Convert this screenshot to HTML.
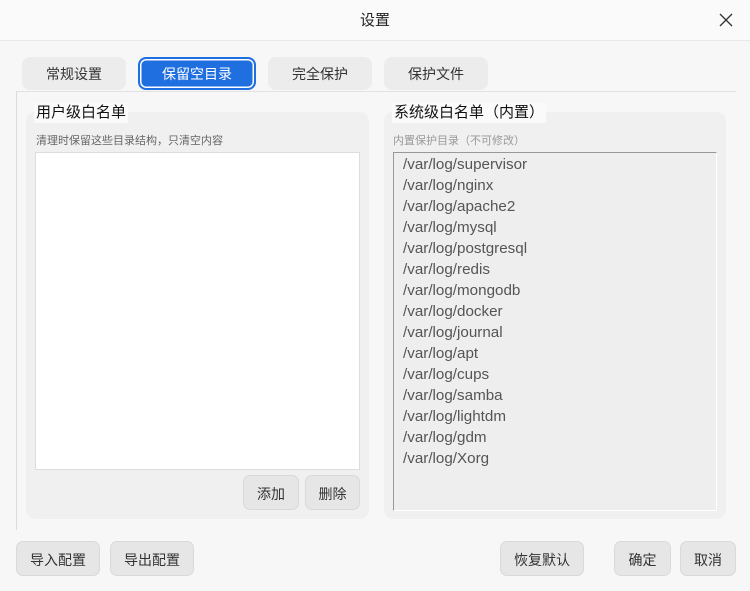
<!DOCTYPE html><html><head><meta charset="utf-8"><style>
*{box-sizing:border-box;margin:0;padding:0}
body{width:750px;height:591px;background:#f7f7f7;font-family:"Liberation Sans","Noto Sans CJK SC",sans-serif;position:relative;overflow:hidden;color:#333}
.a{position:absolute}
.title{left:0;top:0;width:750px;height:41px;background:#fafafa;border-bottom:1px solid #e8e8e8;text-align:center;line-height:42px;font-size:15px;color:#222}
.tab{position:absolute;top:57px;height:33px;background:#ececec;border-radius:8px;text-align:center;line-height:34px;font-size:14px;color:#333}
.tab.on{background:#1f6fe0;color:#fff;border:2px solid #1f6fe0;box-shadow:inset 0 0 0 1.5px #fff;line-height:30px}
.grp{position:absolute;top:112px;height:407px;background:#f0f0f0;border-radius:9px}
.gt{position:absolute;top:103px;font-size:15px;background:#fafafa;padding:0 2px;color:#111;line-height:20px}
.sub{position:absolute;top:132px;font-size:11px}
.btn{position:absolute;height:35px;background:#e6e6e6;border:1px solid #d9d9d9;border-radius:7px;text-align:center;line-height:36px;font-size:14px;color:#333}
.list{left:393px;top:152px;width:324px;height:359px;background:#eeeeee;border:1px solid #fff;border-top:1px solid #999;border-left:1px solid #999;padding:1px 0 0 9px;font-size:15.2px;color:#555;line-height:21px}
</style></head><body>
<div class="a title">设置</div>
<svg class="a" style="left:719px;top:13px" width="14" height="14" viewBox="0 0 14 14"><path d="M1 1L13 13M13 1L1 13" stroke="#333" stroke-width="1.3"/></svg>
<div class="a" style="left:16px;top:91px;width:720px;height:1px;background:#e2e2e2"></div>
<div class="a" style="left:16px;top:91px;width:1px;height:439px;background:#dcdcdc"></div>
<div class="tab" style="left:22px;width:104px">常规设置</div>
<div class="tab on" style="left:138px;width:118px">保留空目录</div>
<div class="tab" style="left:268px;width:104px">完全保护</div>
<div class="tab" style="left:384px;width:104px">保护文件</div>
<div class="grp" style="left:26px;width:343px"></div>
<div class="gt" style="left:34px">用户级白名单</div>
<div class="sub" style="left:36px;color:#666">清理时保留这些目录结构，只清空内容</div>
<div class="a" style="left:35px;top:152px;width:325px;height:318px;background:#fff;border:1px solid #ddd"></div>
<div class="btn" style="left:243px;top:475px;width:56px">添加</div>
<div class="btn" style="left:305px;top:475px;width:55px">删除</div>
<div class="grp" style="left:384px;width:342px"></div>
<div class="gt" style="left:392px">系统级白名单（内置）</div>
<div class="sub" style="left:393px;color:#999">内置保护目录（不可修改）</div>
<div class="a list">/var/log/supervisor<br>/var/log/nginx<br>/var/log/apache2<br>/var/log/mysql<br>/var/log/postgresql<br>/var/log/redis<br>/var/log/mongodb<br>/var/log/docker<br>/var/log/journal<br>/var/log/apt<br>/var/log/cups<br>/var/log/samba<br>/var/log/lightdm<br>/var/log/gdm<br>/var/log/Xorg</div>
<div class="btn" style="left:16px;top:541px;width:84px">导入配置</div>
<div class="btn" style="left:110px;top:541px;width:84px">导出配置</div>
<div class="btn" style="left:500px;top:541px;width:84px">恢复默认</div>
<div class="btn" style="left:614px;top:541px;width:57px">确定</div>
<div class="btn" style="left:680px;top:541px;width:56px">取消</div>
</body></html>
